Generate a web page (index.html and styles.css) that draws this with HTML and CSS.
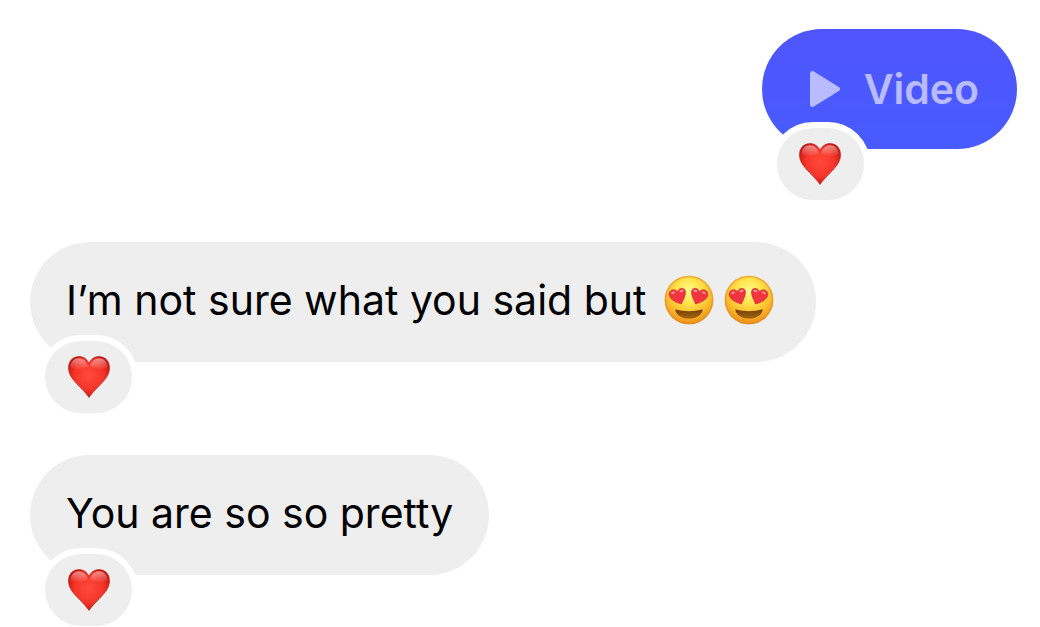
FILE: index.html
```html
<!DOCTYPE html>
<html lang="en">
<head>
    <meta charset="UTF-8">
    <meta name="viewport" content="width=device-width, initial-scale=1">
    <title>Chat</title>
    <link rel="stylesheet" href="styles.css">
</head>
<body>
    <!-- shared artwork for the emoji -->
    <svg class="sprites" aria-hidden="true">
        <defs>
            <radialGradient id="heart-fill" cx="50%" cy="46%" r="58%">
                <stop offset="0" stop-color="#ff4b3c"/>
                <stop offset=".6" stop-color="#f5352a"/>
                <stop offset="1" stop-color="#c3120d"/>
            </radialGradient>
            <linearGradient id="heart-shine" x1="0" y1="0" x2="0" y2="1">
                <stop offset="0" stop-color="#fff" stop-opacity=".5"/>
                <stop offset="1" stop-color="#fff" stop-opacity="0"/>
            </linearGradient>
            <radialGradient id="face-fill" cx="50%" cy="32%" r="68%">
                <stop offset="0" stop-color="#fffb8c"/>
                <stop offset=".35" stop-color="#ffe650"/>
                <stop offset=".7" stop-color="#fdbb2b"/>
                <stop offset="1" stop-color="#ea8c1a"/>
            </radialGradient>
            <linearGradient id="mouth-fill" x1="0" y1="0" x2="0" y2="1">
                <stop offset="0" stop-color="#74400a"/>
                <stop offset="1" stop-color="#a0650c"/>
            </linearGradient>
        </defs>
        <symbol id="heart" viewBox="0 0 42 42">
            <path d="M21 41.500C19 38.500 15.500 34.500 10.500 29.500C4.500 23.500.5 18.500.5 11.800C.5 5 5 .6 11 .6C15.500.6 19 3 21 7.500C23 3 26.500.6 31 .6C37 .6 41.500 5 41.500 11.800C41.500 18.500 37.500 23.500 31.500 29.500C26.500 34.500 23 38.500 21 41.500Z" fill="url(#heart-fill)" stroke="#b8140e" stroke-opacity=".6"/>
            <path d="M2.500 11C3 5.500 6.500 2.200 11 2.200C15 2.200 18.500 5 20 10C15 14 7 15 2.500 11ZM22 10C23.500 5 27 2.200 31 2.200C35.500 2.200 39 5.500 39.500 11C35 15 27 14 22 10Z" fill="url(#heart-shine)"/>
        </symbol>
        <symbol id="heart-eyes" viewBox="0 0 50 50">
            <circle cx="25" cy="25" r="24.300" fill="url(#face-fill)"/>
            <circle cx="25" cy="25" r="23.600" fill="none" stroke="#e0861b" stroke-width="1.500" stroke-opacity=".5"/>
            <g id="eye">
                <path d="M17.300 29C12.500 27.500 6.300 25 5.300 20.300C4.700 16.800 7.500 14.500 10.500 14.900C12 15.100 13 15.900 13.800 17C14 15 15.500 13.400 17.900 13.400C21 13.400 22 16.300 21.200 19.500C20.400 22.800 18.800 26 17.300 29Z" fill="#f03440" stroke="#cf242c" stroke-width=".7"/>
                <path d="M7 19C7 16.800 9.500 15.800 11.500 17C10.500 18.700 8.700 19 7 19ZM15.500 17C15.500 15 17.800 14.200 19.700 15.300C19.700 16.800 17.500 17.800 15.500 17Z" fill="#fff" opacity=".45"/>
            </g>
            <use href="#eye" transform="matrix(-1 0 0 1 49 0)"/>
            <path d="M12.400 34.600C20 36.800 30 36.800 37.600 34.600C38.500 34.400 38.800 35 38.600 35.700C36.800 40.800 31.500 43.600 25 43.600C18.500 43.600 13.200 40.800 11.400 35.700C11.200 35 11.500 34.400 12.400 34.600Z" fill="url(#mouth-fill)"/>
        </symbol>
    </svg>

    <main class="chat">
        <article class="message message-sent">
            <button type="button" class="bubble bubble-video">
                <svg class="play" viewBox="0 0 30 36" aria-hidden="true">
                    <path d="M2.500 2.500V33.500L27.500 18Z"/>
                </svg>
                Video
            </button>
            <button type="button" class="reaction" aria-label="Heart reaction">
                <svg class="heart" aria-hidden="true"><use href="#heart"/></svg>
            </button>
        </article>

        <article class="message">
            <p class="bubble">
                I’m not sure what you said but
                <span class="emojis">
                    <svg class="emoji" role="img" aria-label="Heart eyes"><use href="#heart-eyes"/></svg>
                    <svg class="emoji" role="img" aria-label="Heart eyes"><use href="#heart-eyes"/></svg>
                </span>
            </p>
            <button type="button" class="reaction" aria-label="Heart reaction">
                <svg class="heart" aria-hidden="true"><use href="#heart"/></svg>
            </button>
        </article>

        <article class="message">
            <p class="bubble">You are so so pretty</p>
            <button type="button" class="reaction" aria-label="Heart reaction">
                <svg class="heart" aria-hidden="true"><use href="#heart"/></svg>
            </button>
        </article>
    </main>
</body>
</html>
```
FILE: styles.css
```css
*{
    padding: 0;
    margin: 0;
    box-sizing: border-box;
}
body{
    background-color: #fff;
    color: #000;
    font-family: Inter, "Liberation Sans", sans-serif;
    font-size: 41px;
    line-height: 48px;
}
button{
    border: none;
    font: inherit;
    cursor: pointer;
}
.sprites{
    position: absolute;
    width: 0;
    height: 0;
}
.chat{
    display: flex;
    flex-direction: column;
    align-items: flex-start;
    gap: 93px;
    padding: 29px 23px 52px 30px;
}
.message{
    position: relative;
}
.message-sent{
    align-self: flex-end;
}
.bubble{
    display: flex;
    align-items: center;
    gap: 18px;
    padding: 34px 36px 38px;
    border-radius: 60px;
    background-color: #eee;
}
.bubble-video{
    gap: 24px;
    padding: 36px 38px 36px 48px;
    background: linear-gradient(#4f55fd, #485bff);
    color: #b9bbff;
    font-weight: 600;
}
.play{
    width: 30px;
    height: 36px;
    fill: currentColor;
    stroke: currentColor;
    stroke-width: 5px;
    stroke-linejoin: round;
}
.emojis{
    display: flex;
    gap: 10px;
    padding-right: 6px;
}
.emoji{
    width: 50px;
    height: 50px;
    margin: -1px 0;
}
/* sits over the lower edge of the bubble */
.reaction{
    position: absolute;
    left: 9px;
    bottom: -57px;
    display: flex;
    justify-content: center;
    align-items: center;
    width: 99px;
    height: 84px;
    border: 6px solid #fff;
    border-radius: 42px;
    background-color: #eee;
}
.heart{
    width: 42px;
    height: 42px;
}
```
